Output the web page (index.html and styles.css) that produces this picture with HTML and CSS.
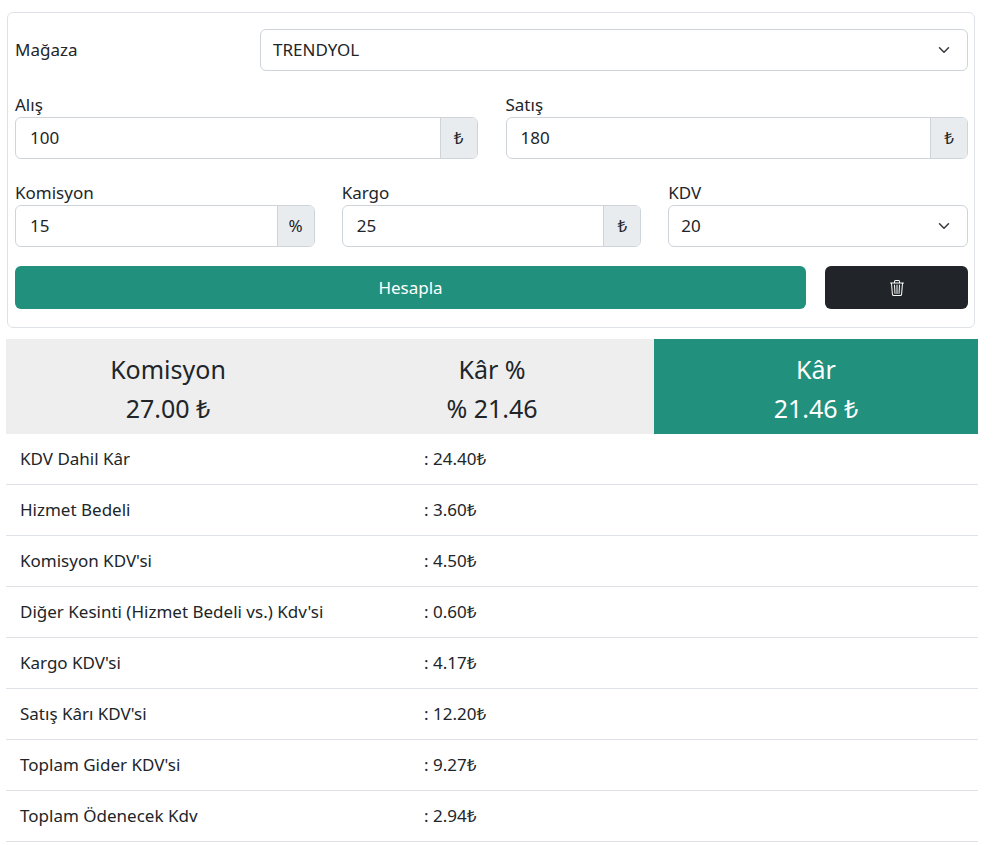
FILE: index.html
```html
<!DOCTYPE html>
<html lang="tr">
<head>
<meta charset="utf-8">
<title>Hesaplama</title>
<link rel="stylesheet" href="styles.css">
</head>
<body>
<div class="page">
  <div class="card">
    <div class="row-store">
      <label class="lbl-inline">Mağaza</label>
      <div class="select">TRENDYOL<span class="chev"><svg viewBox="0 0 16 16" width="16" height="12"><path d="M2 5l6 6 6-6" fill="none" stroke="#343a40" stroke-width="2" stroke-linecap="round" stroke-linejoin="round"/></svg></span></div>
    </div>
    <div class="row two">
      <div class="field">
        <label class="lbl">Alış</label>
        <div class="group"><div class="input">100</div><div class="addon">₺</div></div>
      </div>
      <div class="field">
        <label class="lbl">Satış</label>
        <div class="group"><div class="input">180</div><div class="addon">₺</div></div>
      </div>
    </div>
    <div class="row three">
      <div class="field">
        <label class="lbl">Komisyon</label>
        <div class="group"><div class="input">15</div><div class="addon">%</div></div>
      </div>
      <div class="field">
        <label class="lbl">Kargo</label>
        <div class="group"><div class="input">25</div><div class="addon">₺</div></div>
      </div>
      <div class="field">
        <label class="lbl">KDV</label>
        <div class="select">20<span class="chev"><svg viewBox="0 0 16 16" width="16" height="12"><path d="M2 5l6 6 6-6" fill="none" stroke="#343a40" stroke-width="2" stroke-linecap="round" stroke-linejoin="round"/></svg></span></div>
      </div>
    </div>
    <div class="row buttons">
      <button class="btn btn-green">Hesapla</button>
      <button class="btn btn-dark"><svg width="16" height="16" viewBox="0 0 16 16"><path fill="#fff" d="M6.5 1h3a.5.5 0 0 1 .5.5v1H6v-1a.5.5 0 0 1 .5-.5M11 2.5v-1A1.5 1.5 0 0 0 9.5 0h-3A1.5 1.5 0 0 0 5 1.5v1H1.5a.5.5 0 0 0 0 1h.538l.853 10.66A2 2 0 0 0 4.885 16h6.23a2 2 0 0 0 1.994-1.840l.853-10.66h.538a.5.5 0 0 0 0-1zm1.958 1-.846 10.58a1 1 0 0 1-.997.92h-6.23a1 1 0 0 1-.997-.92L3.042 3.5zm-7.487 1a.5.5 0 0 1 .528.47l.5 8.5a.5.5 0 0 1-.998.06L5 5.03a.5.5 0 0 1 .47-.53Zm5.058 0a.5.5 0 0 1 .47.53l-.5 8.5a.5.5 0 1 1-.998-.06l.5-8.5a.5.5 0 0 1 .528-.47M8 4.5a.5.5 0 0 1 .5.5v8.5a.5.5 0 0 1-1 0V5a.5.5 0 0 1 .5-.5"/></svg></button>
    </div>
  </div>

  <div class="summary">
    <div class="sum-cell"><div class="sum-title">Komisyon</div><div class="sum-value">27.00 ₺</div></div>
    <div class="sum-cell"><div class="sum-title">Kâr %</div><div class="sum-value">% 21.46</div></div>
    <div class="sum-cell green"><div class="sum-title">Kâr</div><div class="sum-value">21.46 ₺</div></div>
  </div>

  <div class="table">
    <div class="tr"><div class="td">KDV Dahil Kâr</div><div class="td">: 24.40₺</div></div>
    <div class="tr"><div class="td">Hizmet Bedeli</div><div class="td">: 3.60₺</div></div>
    <div class="tr"><div class="td">Komisyon KDV'si</div><div class="td">: 4.50₺</div></div>
    <div class="tr"><div class="td">Diğer Kesinti (Hizmet Bedeli vs.) Kdv'si</div><div class="td">: 0.60₺</div></div>
    <div class="tr"><div class="td">Kargo KDV'si</div><div class="td">: 4.17₺</div></div>
    <div class="tr"><div class="td">Satış Kârı KDV'si</div><div class="td">: 12.20₺</div></div>
    <div class="tr"><div class="td">Toplam Gider KDV'si</div><div class="td">: 9.27₺</div></div>
    <div class="tr"><div class="td">Toplam Ödenecek Kdv</div><div class="td">: 2.94₺</div></div>
  </div>
</div>
</body>
</html>
```
FILE: styles.css
```css
* { box-sizing: border-box; }
html, body { margin: 0; padding: 0; background: #fff; }
body {
  font-family: "Noto Sans", "Open Sans", sans-serif;
  font-size: 17px;
  line-height: 24px;
  color: #212529;
}
.page { padding: 12px 19px 0 6px; width: 997px; }
.card {
  margin: 0 3px 0 1px;
  border: 1px solid #dee2e6;
  border-radius: 6px;
  padding: 16px 6px 18px 7px;
}
.row-store {
  display: grid;
  grid-template-columns: 245px 1fr;
  align-items: center;
}
.row { display: grid; margin-top: 22px; }
.row.two { grid-template-columns: 1fr 1fr; column-gap: 28px; }
.row.three { grid-template-columns: 1fr 1fr 1fr; column-gap: 27px; }
.row.buttons { grid-template-columns: 1fr 143px; column-gap: 19px; margin-top: 19px; }
.lbl, .lbl-inline { display: block; height: 24px; }
.select, .group {
  height: 42px;
  border: 1px solid #ced4da;
  border-radius: 6px;
  background: #fff;
}
.select {
  display: flex;
  align-items: center;
  justify-content: space-between;
  padding: 0 15px 0 12px;
}
.chev { display: flex; }
.group { display: flex; overflow: hidden; }
.input { flex: 1; display: flex; align-items: center; padding: 0 14px; }
.addon {
  min-width: 37px;
  padding: 0 11px;
  display: flex; align-items: center; justify-content: center;
  background: #e9ecef;
  border-left: 1px solid #ced4da;
}
.btn {
  height: 43px;
  border: 0;
  border-radius: 6px;
  font: inherit;
  color: #fff;
  display: flex; align-items: center; justify-content: center;
  padding: 0;
}
.btn-green { background: #21907d; }
.btn-dark { background: #212529; }
.summary {
  margin-top: 11px;
  display: grid;
  grid-template-columns: 1fr 1fr 1fr;
  background: #eeeeee;
  width: 972px;
}
.sum-cell {
  text-align: center;
  padding: 11px 0 6px;
  font-size: 25px;
  line-height: 39px;
}
.sum-cell.green { background: #21907d; color: #fff; }
.table { width: 972px; }
.tr {
  display: grid;
  grid-template-columns: 418px 1fr;
  border-bottom: 1px solid #dee2e6;
  height: 51px;
  align-items: center;
}
.td { padding: 0 14px; }
.td + .td { padding: 0; }
```
